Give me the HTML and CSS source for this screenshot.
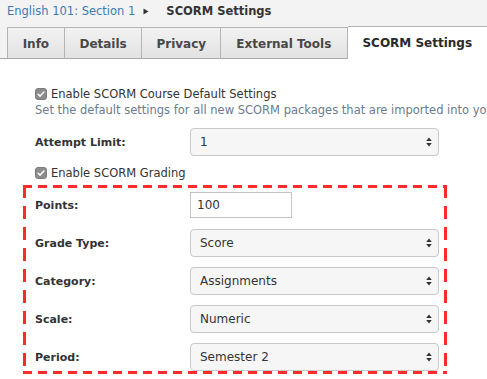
FILE: index.html
```html
<!DOCTYPE html>
<html>
<head>
<meta charset="utf-8">
<link rel="stylesheet" href="styles.css">
</head>
<body>
<div class="header">
  <div class="crumbs"><a class="crumb-link">English 101: Section 1</a><svg class="crumb-sep" width="6" height="7" viewBox="0 0 6 7"><path d="M0.5 0.5 L5.5 3.5 L0.5 6.5 Z" fill="#333"/></svg><span class="crumb-current">SCORM Settings</span></div>
  <div class="tabs">
    <div class="tab tab-info">Info</div>
    <div class="tab tab-details">Details</div>
    <div class="tab tab-privacy">Privacy</div>
    <div class="tab tab-ext">External Tools</div>
    <div class="tab tab-active">SCORM Settings</div>
  </div>
</div>
<div class="content">
  <div class="check-row first">
    <span class="checkbox"><svg width="12" height="12" viewBox="0 0 12 12"><rect x="0.5" y="0.5" width="11" height="11" rx="2.5" fill="#8c8c8c" stroke="#7c7c7c"/><path d="M3.2 6.2 L5.1 8.1 L8.9 3.9" fill="none" stroke="#fff" stroke-width="1.5" stroke-linecap="round" stroke-linejoin="round"/></svg></span>
    <span>Enable SCORM Course Default Settings</span>
  </div>
  <div class="hint">Set the default settings for all new SCORM packages that are imported into your course.</div>
  <div class="field-row attempt">
    <div class="label">Attempt Limit:</div>
    <div class="select"><span>1</span><svg class="arrows" width="6" height="10" viewBox="0 0 6 10"><path d="M3 0.5 L5.8 4 L0.2 4 Z M3 9.5 L5.8 6 L0.2 6 Z" fill="#333"/></svg></div>
  </div>
  <div class="check-row second">
    <span class="checkbox"><svg width="12" height="12" viewBox="0 0 12 12"><rect x="0.5" y="0.5" width="11" height="11" rx="2.5" fill="#8c8c8c" stroke="#7c7c7c"/><path d="M3.2 6.2 L5.1 8.1 L8.9 3.9" fill="none" stroke="#fff" stroke-width="1.5" stroke-linecap="round" stroke-linejoin="round"/></svg></span>
    <span>Enable SCORM Grading</span>
  </div>
  <div class="grading">
    <div class="field-row">
      <div class="label">Points:</div>
      <div class="input">100</div>
    </div>
    <div class="field-row">
      <div class="label">Grade Type:</div>
      <div class="select"><span>Score</span><svg class="arrows" width="6" height="10" viewBox="0 0 6 10"><path d="M3 0.5 L5.8 4 L0.2 4 Z M3 9.5 L5.8 6 L0.2 6 Z" fill="#333"/></svg></div>
    </div>
    <div class="field-row">
      <div class="label">Category:</div>
      <div class="select"><span>Assignments</span><svg class="arrows" width="6" height="10" viewBox="0 0 6 10"><path d="M3 0.5 L5.8 4 L0.2 4 Z M3 9.5 L5.8 6 L0.2 6 Z" fill="#333"/></svg></div>
    </div>
    <div class="field-row">
      <div class="label">Scale:</div>
      <div class="select"><span>Numeric</span><svg class="arrows" width="6" height="10" viewBox="0 0 6 10"><path d="M3 0.5 L5.8 4 L0.2 4 Z M3 9.5 L5.8 6 L0.2 6 Z" fill="#333"/></svg></div>
    </div>
    <div class="field-row">
      <div class="label">Period:</div>
      <div class="select"><span>Semester 2</span><svg class="arrows" width="6" height="10" viewBox="0 0 6 10"><path d="M3 0.5 L5.8 4 L0.2 4 Z M3 9.5 L5.8 6 L0.2 6 Z" fill="#333"/></svg></div>
    </div>
  </div>
</div>
</body>
</html>
```

FILE: styles.css
```css
html, body {
  margin: 0;
  padding: 0;
  background: #fff;
  overflow: hidden;
}
body {
  font-family: "DejaVu Sans", sans-serif;
  font-size: 11.5px;
  color: #333;
  width: 487px;
  height: 379px;
}
.header {
  background: #f3f3f3;
  border-bottom: 1px solid #a9a9a9;
  height: 59px;
  box-sizing: border-box;
}
.crumbs {
  height: 27px;
  padding-left: 7px;
  display: flex;
  align-items: center;
  padding-bottom: 5px;
  box-sizing: border-box;
  white-space: nowrap;
}
.crumb-link {
  color: #3d7ab5;
}
.crumb-sep {
  flex: none;
  margin-left: 8px;
}
.crumb-current {
  font-weight: bold;
  color: #333;
  margin-left: 17px;
}
.tabs {
  display: flex;
  align-items: flex-end;
  padding-left: 7px;
  height: 31px;
}
.tab {
  height: 31px;
  box-sizing: border-box;
  border: 1px solid #b4b4b4;
  border-bottom: none;
  border-right: none;
  background: linear-gradient(#f2f2f2, #e2e2e2);
  font-weight: bold;
  font-size: 12px;
  color: #484848;
  display: flex;
  align-items: center;
  justify-content: center;
  padding-top: 1px;
}
.tab-info { width: 57px; }
.tab-details { width: 78px; }
.tab-privacy { width: 79px; }
.tab-ext { width: 128px; border-right: 1px solid #b4b4b4; }
.tab-active {
  width: 140px;
  height: 33px;
  margin-bottom: -1px;
  background: #fff;
  color: #2a2a2a;
  border-left: none;
  border-top: 1px solid #b4b4b4;
  padding-top: 0;
}
.content {
  padding-left: 35px;
  padding-top: 28px;
}
.check-row {
  display: flex;
  align-items: center;
  height: 14px;
  line-height: 14px;
  color: #333;
}
.check-row.second {
  margin-top: 10px;
}
.checkbox {
  display: flex;
  margin-right: 4px;
}
.hint {
  color: #6b7b8c;
  margin-top: 2px;
  line-height: 14px;
  white-space: nowrap;
}
.field-row {
  display: flex;
  align-items: center;
  height: 28px;
}
.field-row.attempt {
  margin-top: 11px;
}
.label {
  width: 155px;
  font-weight: bold;
  font-size: 11px;
  color: #333;
}
.select {
  width: 249px;
  height: 28px;
  box-sizing: border-box;
  border: 1px solid #c9c9c9;
  border-radius: 4px;
  background: #f6f6f6;
  display: flex;
  align-items: center;
  justify-content: space-between;
  padding: 0 6px 0 9px;
  font-size: 12px;
  color: #333;
}
.input {
  width: 102px;
  height: 26px;
  box-sizing: border-box;
  border: 1px solid #c4c4c4;
  background: #fff;
  display: flex;
  align-items: center;
  padding-left: 6px;
  font-size: 12px;
  color: #333;
}
.grading {
  margin-top: 5px;
  margin-left: -12px;
  width: 424px;
  height: 189px;
  box-sizing: border-box;
  padding: 6px 0 0 12px;
  display: flex;
  flex-direction: column;
  gap: 10px;
  background:
    repeating-linear-gradient(to right, #ff2b2b 0 9px, transparent 9px 15px) left top / 100% 3px no-repeat,
    repeating-linear-gradient(to right, #ff2b2b 0 9px, transparent 9px 15px) left bottom / 100% 3px no-repeat,
    repeating-linear-gradient(to bottom, #ff2b2b 0 13px, transparent 13px 21px) left top / 3px 100% no-repeat,
    repeating-linear-gradient(to bottom, #ff2b2b 0 13px, transparent 13px 21px) right top / 3px 100% no-repeat;
}
```
